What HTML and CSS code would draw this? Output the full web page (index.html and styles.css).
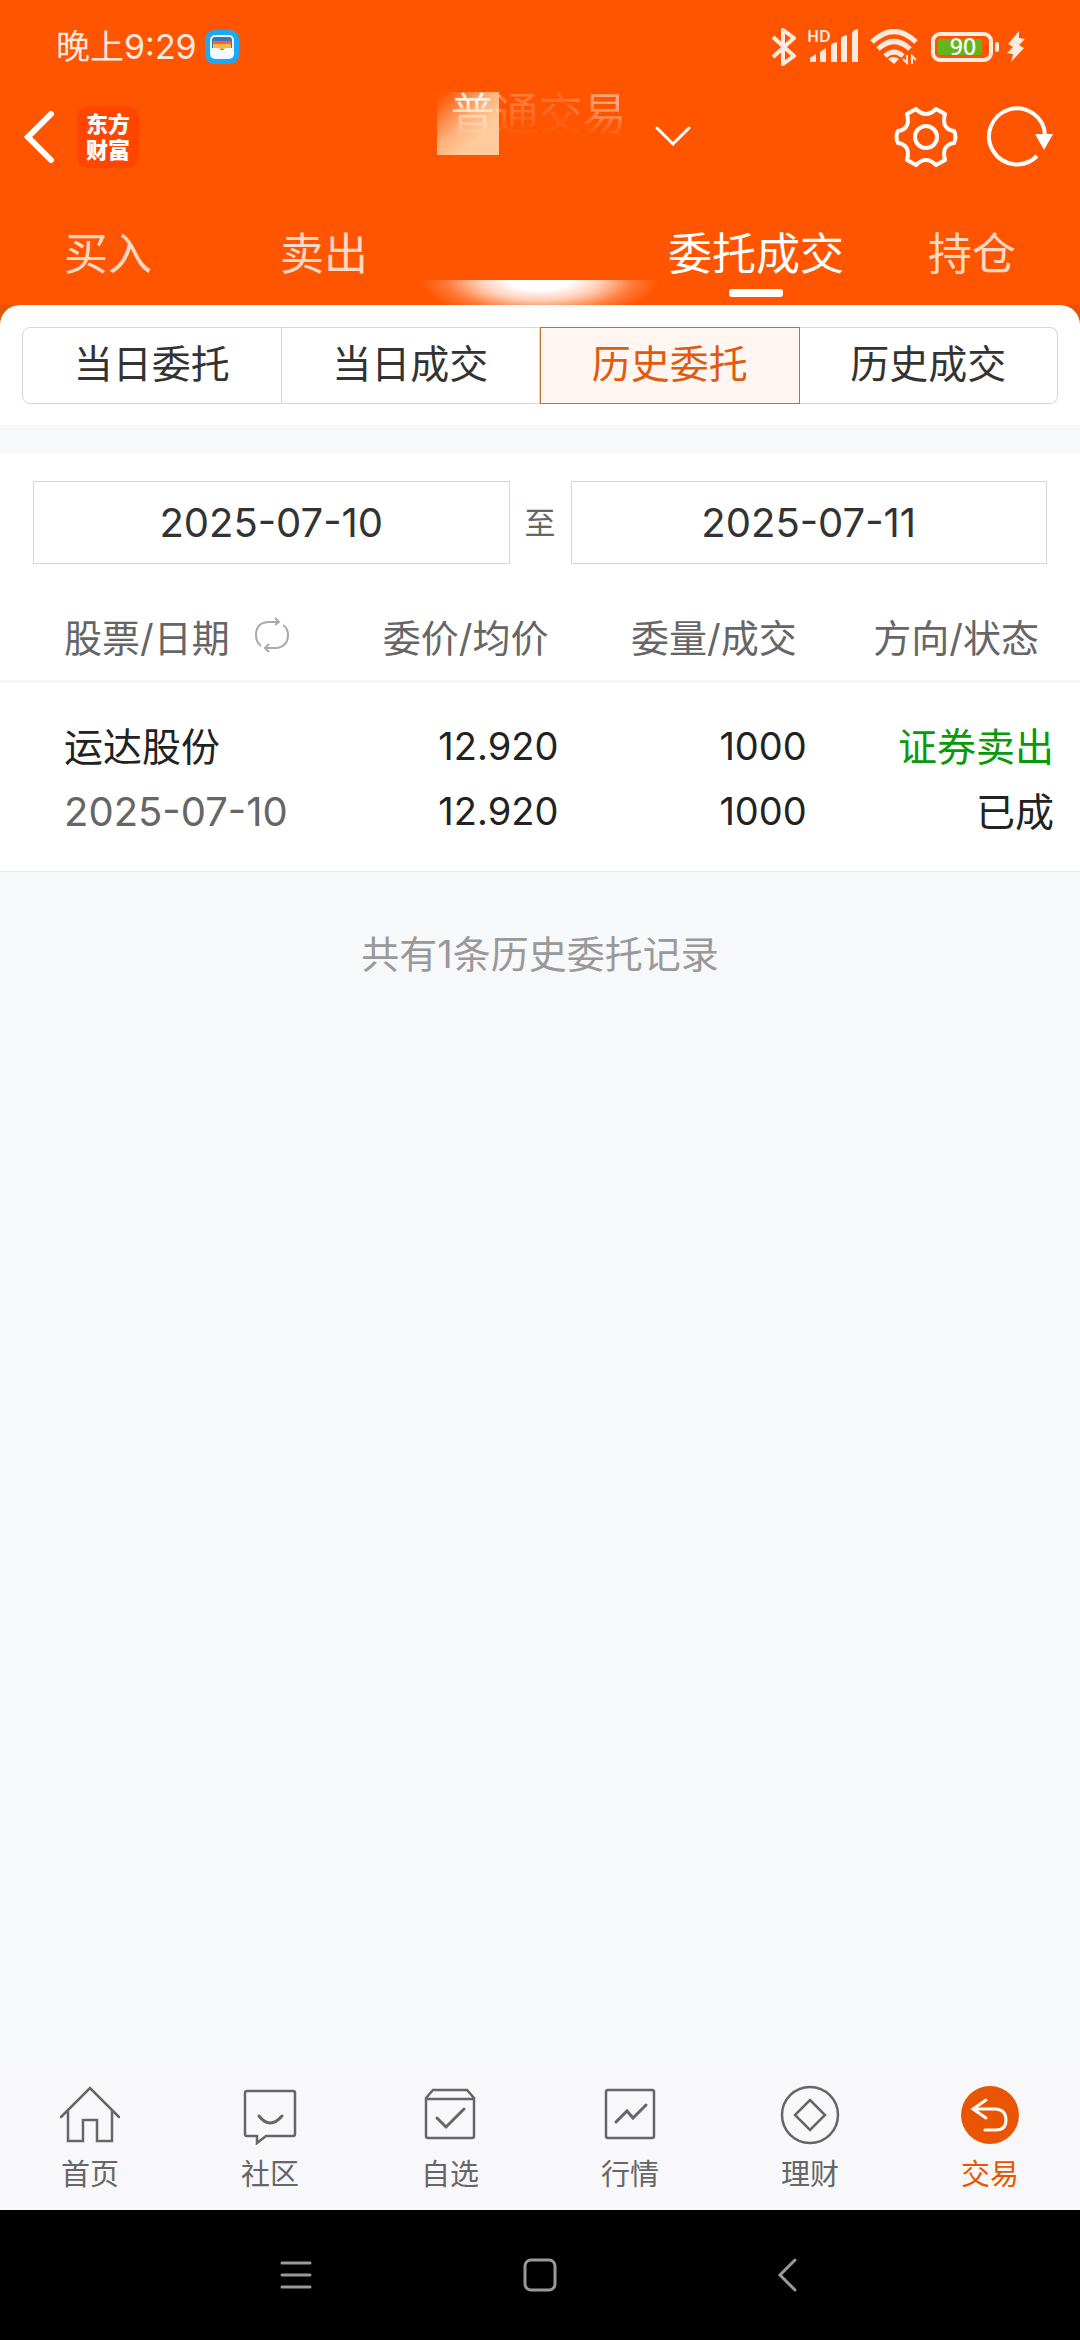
FILE: index.html
```html
<!DOCTYPE html>
<html lang="zh-CN">

<head>
    <meta charset="UTF-8">
    <meta name="viewport" content="width=device-width, initial-scale=1.0">
    <title>历史委托</title>
    <link rel="stylesheet" href="styles.css">
</head>

<body>
    <header class="header">
        <div class="status-bar">
            <span class="clock">晚上9:29</span>
            <svg class="status-app" width="34" height="34" viewBox="0 0 34 34">
                <rect width="34" height="34" rx="9" fill="#1ea7f5" />
                <rect x="6" y="6" width="22" height="22" rx="4" fill="#3f74b8" stroke="#eaf6ff" stroke-width="2" />
                <path d="M8 11h18v4H8z" fill="#f0643c" />
                <path d="M8 14h18v5H8z" fill="#ffb648" />
                <path d="M6 18h8q1 2 3 2t3-2h8v7q0 3-3 3H9q-3 0-3-3z" fill="#f2faff" />
            </svg>
            <div class="status-icons">
                <svg class="bluetooth" width="26" height="40" viewBox="0 0 26 40">
                    <path d="M2 10l21 19-11 8V3l11 8L2 30" fill="none" stroke="#ffeae0" stroke-width="4" stroke-linejoin="round" />
                </svg>
                <svg class="signal" width="52" height="48" viewBox="0 -6 52 48">
                    <text x="0" y="13" class="hd">HD</text>
                    <g fill="#ffeae0">
                        <path d="M3 33v-4l6-4v8zM13 33V23l6-4v14zM24 33V17q0-3 6-4v20zM34 33V10q0-3 6-4v27zM45 33V5q0-4 6-5v33z" />
                    </g>
                </svg>
                <svg class="wifi" width="48" height="36" viewBox="0 0 48 36">
                    <g fill="none" stroke="#ffeae0" stroke-width="5">
                        <path d="M2 13q22-21 44 0M8 20q16-15 32 0M15 27q9-8 18 0" />
                    </g>
                    <path d="M18 30q6-4 11 0l-5 5z" fill="#ffeae0" />
                    <path d="M37 26v8l-4-4M42 35v-8l4 4" fill="none" stroke="#ffeae0" stroke-width="2" />
                </svg>
                <svg class="battery" width="70" height="46" viewBox="0 -8 70 46">
                    <rect x="2" y="2" width="58" height="26" rx="7" fill="none" stroke="#ffeae0" stroke-width="4" />
                    <rect x="7" y="7" width="44" height="16" rx="2" fill="#64b41a" />
                    <rect x="64" y="10" width="4" height="10" rx="2" fill="#ffeae0" />
                    <text x="32" y="23" class="level">90</text>
                </svg>
                <svg class="bolt" width="20" height="32" viewBox="0 0 20 32">
                    <path d="M13 0L2 13l5 3-6 6 6 1-2 8L18 17l-5-3 6-6-6-1z" fill="#ffeae0" />
                </svg>
            </div>
        </div>

        <div class="title-bar">
            <div class="title-left">
                <button type="button" class="icon-btn" aria-label="返回">
                    <svg width="32" height="54" viewBox="0 0 32 54">
                        <path d="M28 4L5 27l23 23" fill="none" stroke="#fff" stroke-width="6" stroke-linecap="round" />
                    </svg>
                </button>
                <a href="#" class="logo"><span>东方</span><span>财富</span></a>
            </div>
            <h1 class="title"><span class="title-text">普通交易</span></h1>
            <div class="title-right">
                <button type="button" class="icon-btn" aria-label="切换账户">
                    <svg width="36" height="22" viewBox="0 0 36 22">
                        <path d="M2 2l16 16L34 2" fill="none" stroke="#fff" stroke-width="3" stroke-linecap="round" />
                    </svg>
                </button>
                <div class="actions">
                    <button type="button" class="icon-btn" aria-label="设置">
                        <svg width="64" height="64" viewBox="0 0 64 64">
                            <g fill="none" stroke="#fff" stroke-width="4" stroke-linejoin="round">
                                <path d="M22 4q10 10 20 0l9 5q-4 15 9 17 3 6 0 12-13 2-9 17l-9 5q-10-10-20 0l-9-5q4-15-9-17-3-6 0-12 13-2 9-17z" />
                                <circle cx="32" cy="32" r="11" />
                            </g>
                        </svg>
                    </button>
                    <button type="button" class="icon-btn" aria-label="刷新">
                        <svg width="68" height="64" viewBox="0 0 68 64">
                            <path d="M59 30A28 28 0 1 0 51 51" fill="none" stroke="#fff" stroke-width="4" />
                            <path d="M49 29h18l-9 16z" fill="#fff" />
                        </svg>
                    </button>
                </div>
            </div>
        </div>

        <nav class="tabs">
            <a href="#">买入</a>
            <a href="#">卖出</a>
            <a href="#" class="glow" aria-label="撤单"></a>
            <a href="#" class="active">委托成交</a>
            <a href="#">持仓</a>
        </nav>
    </header>

    <main>
        <div class="panel-wrap">
            <div class="panel">
                <div class="segments">
                    <button type="button">当日委托</button>
                    <button type="button">当日成交</button>
                    <button type="button" class="active">历史委托</button>
                    <button type="button">历史成交</button>
                </div>
            </div>
        </div>

        <section class="records">
            <form class="dates">
                <input type="text" value="2025-07-10" aria-label="开始日期" readonly>
                <span>至</span>
                <input type="text" value="2025-07-11" aria-label="结束日期" readonly>
            </form>
            <table class="orders">
                <thead>
                    <tr>
                        <th>
                            <div class="sortable">
                                股票/日期
                                <svg width="36" height="36" viewBox="0 0 36 36">
                                    <g fill="none" stroke="#aaa" stroke-width="2">
                                        <path d="M7 29Q2 25 2 18 2 6 14 5h11M21 1l4 4-4 3M29 8q5 3 5 10 0 11-11 13H12M15 27l-4 4 4 4" />
                                    </g>
                                </svg>
                            </div>
                        </th>
                        <th>委价/均价</th>
                        <th>委量/成交</th>
                        <th>方向/状态</th>
                    </tr>
                </thead>
                <tbody>
                    <tr>
                        <td>运达股份<br><span class="date">2025-07-10</span></td>
                        <td class="num">12.920<br>12.920</td>
                        <td class="num">1000<br>1000</td>
                        <td><span class="sell">证券卖出</span><br>已成</td>
                    </tr>
                </tbody>
            </table>
        </section>
        <p class="total">共有1条历史委托记录</p>
    </main>

    <nav class="bottom-nav">
        <a href="#">
            <svg width="60" height="60" viewBox="0 0 60 60">
                <path d="M1 32L30 3l29 29M8 26v30h15V35h14v21h15V26" />
            </svg>
            首页
        </a>
        <a href="#">
            <svg width="60" height="60" viewBox="0 0 60 60">
                <path d="M7 6h46q2 0 2 2v41q0 2-2 2H26l-9 7v-7H7q-2 0-2-2V8q0-2 2-2z" />
                <path class="bold" d="M19 31q11 14 23 0" />
            </svg>
            社区
        </a>
        <a href="#">
            <svg width="60" height="60" viewBox="0 0 60 60">
                <path d="M6 13l7-8h34l7 8v38q0 2-2 2H8q-2 0-2-2zM6 14h48" />
                <path class="bold" d="M17 33l9 9 18-18" />
            </svg>
            自选
        </a>
        <a href="#">
            <svg width="60" height="60" viewBox="0 0 60 60">
                <rect x="6" y="5" width="48" height="48" rx="2" />
                <path class="bold" d="M16 37l11-11 6 7 13-13" />
            </svg>
            行情
        </a>
        <a href="#">
            <svg width="60" height="60" viewBox="0 0 60 60">
                <circle cx="30" cy="30" r="28" />
                <path d="M30 15l15 15-15 15-15-15z" />
            </svg>
            理财
        </a>
        <a href="#" class="active">
            <svg width="60" height="60" viewBox="0 0 60 60">
                <circle class="disc" cx="30" cy="30" r="29" />
                <path class="arrow" d="M26 15L13 24l13 9M13 24h23q10 1 10 11T36 45H25" />
            </svg>
            交易
        </a>
    </nav>

    <div class="system-nav">
        <button type="button" class="icon-btn" aria-label="最近任务">
            <svg width="36" height="36" viewBox="0 0 36 36">
                <path d="M5 6h28M5 18h28M5 30h28" />
            </svg>
        </button>
        <button type="button" class="icon-btn" aria-label="主屏幕">
            <svg width="36" height="36" viewBox="0 0 36 36">
                <rect x="3" y="3" width="30" height="30" rx="6" />
            </svg>
        </button>
        <button type="button" class="icon-btn" aria-label="后退">
            <svg width="36" height="36" viewBox="0 0 36 36">
                <path d="M28 3L13 18l15 15" />
            </svg>
        </button>
    </div>
</body>

</html>
```

FILE: styles.css
```css
* {
    box-sizing: border-box;
}

body {
    display: flex;
    flex-direction: column;
    min-height: 100vh;
    margin: 0;
    background-color: #f7f8fa;
    color: #222;
    font-family: Inter, "Noto Sans CJK SC", sans-serif;
    font-size: 38px;
    font-weight: 400;
}

a {
    color: inherit;
    text-decoration: none;
}

button,
input {
    font: inherit;
    color: inherit;
}

svg {
    display: block;
    flex: none;
}

.icon-btn {
    padding: 0;
    border: none;
    background: none;
    cursor: pointer;
}

.header {
    background-color: #ff5500;
    color: #fff;
}

/* status bar */
.status-bar {
    display: flex;
    align-items: center;
    height: 94px;
    padding: 0 54px 0 56px;
}

.clock {
    font-size: 34px;
    line-height: 40px;
    color: #ffeae0;
}

.status-app {
    margin-left: 8px;
}

.status-icons {
    display: flex;
    align-items: center;
    margin-left: auto;
}

.signal {
    margin-left: 10px;
}

.wifi {
    margin-left: 11px;
}

.battery {
    margin-left: 13px;
}

.bolt {
    margin-left: 5px;
}

.hd {
    font-family: "Noto Sans", sans-serif;
    font-size: 16px;
    font-weight: 600;
    fill: #ffeae0;
}

.level {
    font-family: "Noto Sans", sans-serif;
    font-size: 23px;
    font-weight: 500;
    text-anchor: middle;
    fill: #fff;
}

/* title bar */
.title-bar {
    display: grid;
    grid-template-columns: 1fr auto 1fr;
    align-items: center;
    height: 86px;
    padding: 0 26px 0 23px;
}

.title-left,
.title-right,
.actions {
    display: flex;
    align-items: center;
}

.title-left {
    gap: 22px;
}

.title-right {
    padding-left: 28px;
}

.actions {
    gap: 28px;
    margin-left: auto;
}

.logo {
    display: flex;
    flex-direction: column;
    align-items: center;
    justify-content: center;
    width: 62px;
    height: 62px;
    border-radius: 12px;
    background-color: #ff4500;
    font-size: 22px;
    font-weight: 900;
    line-height: 26px;
}

.title {
    position: relative;
    align-self: start;
    margin: 0;
    font-size: 44px;
    font-weight: 400;
    line-height: 40px;
}

/* blurred tile behind the account name */
.title::before {
    content: "";
    position: absolute;
    top: -2px;
    left: -14px;
    width: 62px;
    height: 63px;
    background: linear-gradient(135deg, #ff5a08 8%, #ffb27c 45%, #ffcb9c 70%);
}

.title-text {
    position: relative;
    background: linear-gradient(90deg, #fff0e0 26%, #ff8448 28%, #fa6c28 65%, #ffa880 85%);
    background-clip: text;
    color: transparent;
    -webkit-mask-image: linear-gradient(180deg, #000 30%, #0003 80%);
    mask-image: linear-gradient(180deg, #000 30%, #0003 80%);
}

/* buy / sell / orders / positions */
.tabs {
    display: grid;
    grid-template-columns: repeat(5, 1fr);
}

.tabs a {
    position: relative;
    height: 125px;
    padding-top: 44px;
    color: #ffd9c6;
    font-size: 44px;
    line-height: 60px;
    text-align: center;
    white-space: nowrap;
}

.tabs .active {
    color: #fff;
}

.tabs .active::after {
    content: "";
    position: absolute;
    bottom: 8px;
    left: 50%;
    width: 54px;
    height: 8px;
    margin-left: -27px;
    border-radius: 3px;
    background-color: #fff;
}

.tabs .glow::after {
    content: "";
    position: absolute;
    right: -20px;
    bottom: 0;
    left: -20px;
    height: 25px;
    background: radial-gradient(ellipse 120px 40px at 50% 0, #fff 25%, #ffffffb8 50%, #ffffff38 78%, #ffffff00 100%);
}

/* order type */
.panel-wrap {
    background-color: #e65208;
}

.panel {
    padding: 22px 22px 21px;
    border-radius: 20px 20px 0 0;
    background-color: #fff;
}

.segments {
    display: flex;
}

.segments button {
    flex: 1;
    height: 77px;
    padding: 0 0 4px;
    border: 1px solid #d5d7da;
    background-color: #fff;
    color: #333;
    font-size: 39px;
    line-height: 60px;
    cursor: pointer;
}

.segments button + button {
    border-left: none;
}

.segments button:first-child {
    border-radius: 8px 0 0 8px;
}

.segments button:last-child {
    border-radius: 0 8px 8px 0;
}

.segments .active,
.segments button + .active {
    border: 1px solid #c07038;
    background-color: #fff5f1;
    color: #e05a10;
}

/* date range and orders */
.records {
    margin-top: 29px;
    background-color: #fff;
}

.dates {
    display: flex;
    align-items: center;
    padding: 27px 33px 30px;
}

.dates input {
    flex: 1;
    min-width: 0;
    height: 83px;
    padding: 0;
    border: 1px solid #d5d7da;
    border-radius: 0;
    background-color: #fff;
    color: #333;
    font-size: 40px;
    text-align: center;
    outline: none;
}

.dates span {
    width: 61px;
    color: #666;
    font-size: 31px;
    line-height: 40px;
    text-align: center;
}

.orders {
    width: 100%;
    table-layout: fixed;
    border-collapse: separate;
    border-spacing: 0;
}

.orders th {
    width: 23%;
    height: 89px;
    padding: 0 24px 4px 0;
    border-bottom: 3px solid #f6f6f7;
    color: #666;
    font-weight: 400;
    text-align: right;
    white-space: nowrap;
}

.orders th:first-child {
    width: 30%;
    padding-left: 64px;
    padding-right: 0;
    text-align: left;
}

.orders th:last-child {
    width: 24%;
    padding-right: 41px;
}

.sortable {
    display: flex;
    align-items: center;
    gap: 24px;
}

.orders td {
    padding: 31px 14px 27px 0;
    border-bottom: 1px solid #e8e8ea;
    font-size: 39px;
    line-height: 65px;
    text-align: right;
    white-space: nowrap;
}

.orders .num {
    font-size: 38px;
}

.orders td:first-child {
    padding-left: 64px;
    padding-right: 0;
    text-align: left;
}

.orders td:last-child {
    padding-right: 26px;
}

.date {
    color: #666;
    font-size: 40px;
}

.sell {
    color: #0a990a;
}

.total {
    margin: 54px 0;
    color: #999;
    line-height: 56px;
    text-align: center;
}

/* bottom navigation */
.bottom-nav {
    display: grid;
    grid-template-columns: repeat(6, 1fr);
    margin-top: auto;
    padding: 27px 0 15px;
    background-color: #f8f8fa;
}

.bottom-nav a {
    display: flex;
    flex-direction: column;
    align-items: center;
    gap: 10px;
    color: #666;
    font-size: 29px;
    line-height: 40px;
}

.bottom-nav svg {
    fill: none;
    stroke: #666;
    stroke-width: 2.5;
    stroke-linecap: round;
}

.bottom-nav .bold {
    stroke-width: 3;
}

.bottom-nav .active {
    color: #e85500;
}

.bottom-nav .disc {
    fill: #ea5504;
    stroke: none;
}

.bottom-nav .arrow {
    stroke: #fff;
    stroke-width: 3;
}

.system-nav {
    display: grid;
    grid-template-columns: repeat(3, 1fr);
    height: 130px;
    padding: 0 16%;
    background-color: #000;
}

.system-nav button {
    display: flex;
    align-items: center;
    justify-content: center;
}

.system-nav svg {
    fill: none;
    stroke: #999;
    stroke-width: 3;
    stroke-linecap: round;
}
```
